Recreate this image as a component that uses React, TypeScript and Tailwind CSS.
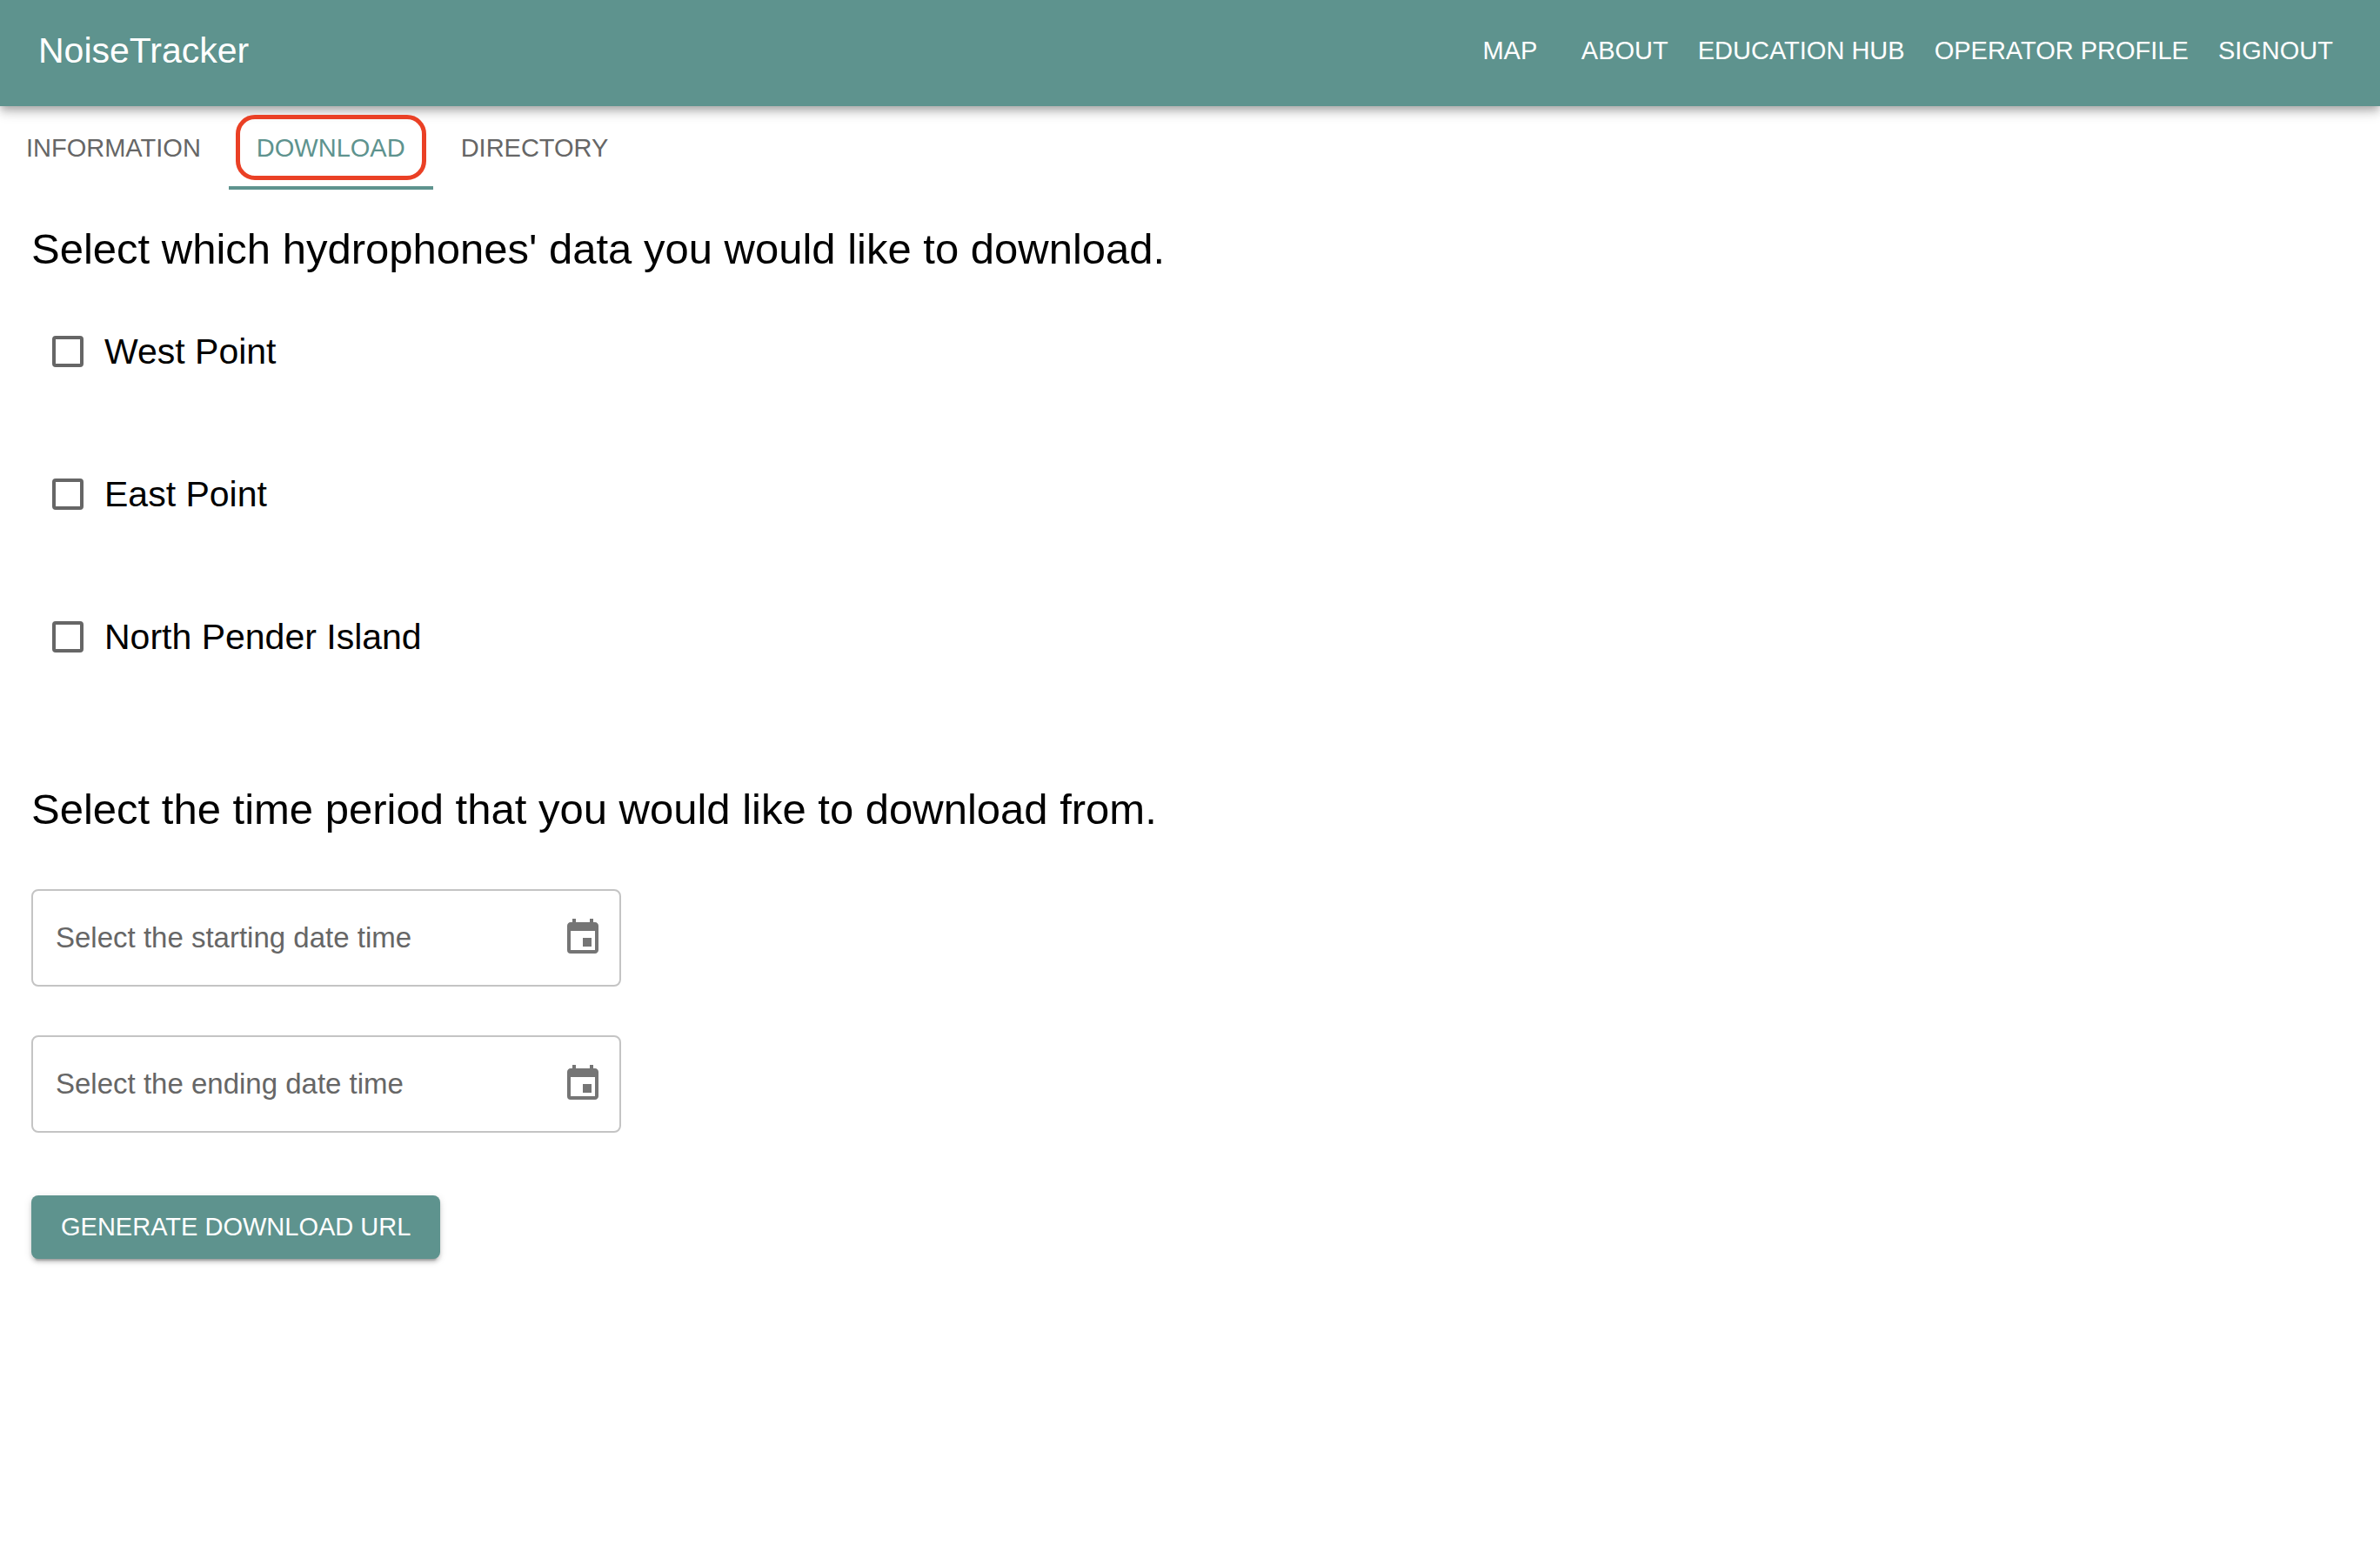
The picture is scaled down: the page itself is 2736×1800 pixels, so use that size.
import { useState } from "react";
import { MdEvent } from "react-icons/md";

const navLinks = ["MAP", "ABOUT", "EDUCATION HUB", "OPERATOR PROFILE", "SIGNOUT"];
const tabs = ["INFORMATION", "DOWNLOAD", "DIRECTORY"];
const hydrophones = ["West Point", "East Point", "North Pender Island"];

function Header() {
  return (
    <header className="relative z-10 flex h-[122px] items-center justify-between bg-[#5e938e] pr-[38px] pb-1.5 pl-11 text-white shadow-[0_4px_8px_-2px_rgba(0,0,0,0.2),0_8px_10px_0_rgba(0,0,0,0.14),0_2px_20px_0_rgba(0,0,0,0.12)]">
      <a href="#home" className="text-[41px] leading-[64px]">
        NoiseTracker
      </a>
      <nav className="flex items-center gap-0.5">
        {navLinks.map((label) => (
          <a
            key={label}
            href={"#" + label.toLowerCase().replace(" ", "-")}
            className="min-w-32 px-4 text-center text-[29px] leading-[48px] whitespace-nowrap"
          >
            {label}
          </a>
        ))}
      </nav>
    </header>
  );
}

function TabBar() {
  const [active, setActive] = useState("DOWNLOAD");
  return (
    <div role="tablist" className="-ml-0.5 flex h-24">
      {tabs.map((label) => {
        const selected = label === active;
        return (
          <button
            key={label}
            type="button"
            role="tab"
            aria-selected={selected}
            onClick={() => setActive(label)}
            className={
              selected
                ? "relative border-b-4 border-[#5e938e] px-8 pt-1 text-[29px] leading-9 text-[#5e938e]"
                : "relative px-8 text-[29px] leading-9 text-[#666666]"
            }
          >
            {label}
            {label === "DOWNLOAD" && (
              <span className="pointer-events-none absolute inset-x-2 top-2.5 z-20 h-[75px] rounded-[22px] border-5 border-[#ea4025]" />
            )}
          </button>
        );
      })}
    </div>
  );
}

function Hydrophone({ name }: { name: string }) {
  return (
    <label className="flex h-16 items-center gap-6 self-start pl-6 text-[41px] leading-[64px]">
      <input
        type="checkbox"
        className="size-9 appearance-none rounded-sm border-4 border-[#666666] checked:bg-[#5e938e]"
      />
      {name}
    </label>
  );
}

function DateField({ label }: { label: string }) {
  return (
    <div className="flex h-28 w-[678px] items-center rounded-lg border-2 border-[#c4c4c4] pr-[18px] pl-[26px]">
      <input
        type="text"
        aria-label={label}
        placeholder={label}
        className="min-w-0 flex-1 text-[33px] leading-[46px] outline-none placeholder:text-[#666666]"
      />
      <button type="button" aria-label="Choose date" className="text-[#757575]">
        <MdEvent className="size-12" />
      </button>
    </div>
  );
}

export default function App() {
  return (
    <div className="min-h-screen bg-white font-['Liberation_Sans',Arial,sans-serif] text-black">
      <Header />
      <TabBar />
      <main className="flex flex-col items-start px-9 pt-9">
        <h2 className="text-[49px] leading-[64px]">
          Select which hydrophones' data you would like to download.
        </h2>
        <div className="mt-[54px] flex flex-col gap-[100px]">
          {hydrophones.map((name) => (
            <Hydrophone key={name} name={name} />
          ))}
        </div>
        <h2 className="mt-[134px] text-[49px] leading-[64px]">
          Select the time period that you would like to download from.
        </h2>
        <div className="mt-[60px] flex flex-col gap-14">
          <DateField label="Select the starting date time" />
          <DateField label="Select the ending date time" />
        </div>
        <button
          type="button"
          className="mt-[72px] rounded-lg bg-[#5e938e] px-[34px] py-3 text-[29px] leading-[49px] text-white shadow-[0_6px_2px_-4px_rgba(0,0,0,0.2),0_4px_4px_0_rgba(0,0,0,0.14),0_2px_10px_0_rgba(0,0,0,0.12)]"
        >
          GENERATE DOWNLOAD URL
        </button>
      </main>
    </div>
  );
}
